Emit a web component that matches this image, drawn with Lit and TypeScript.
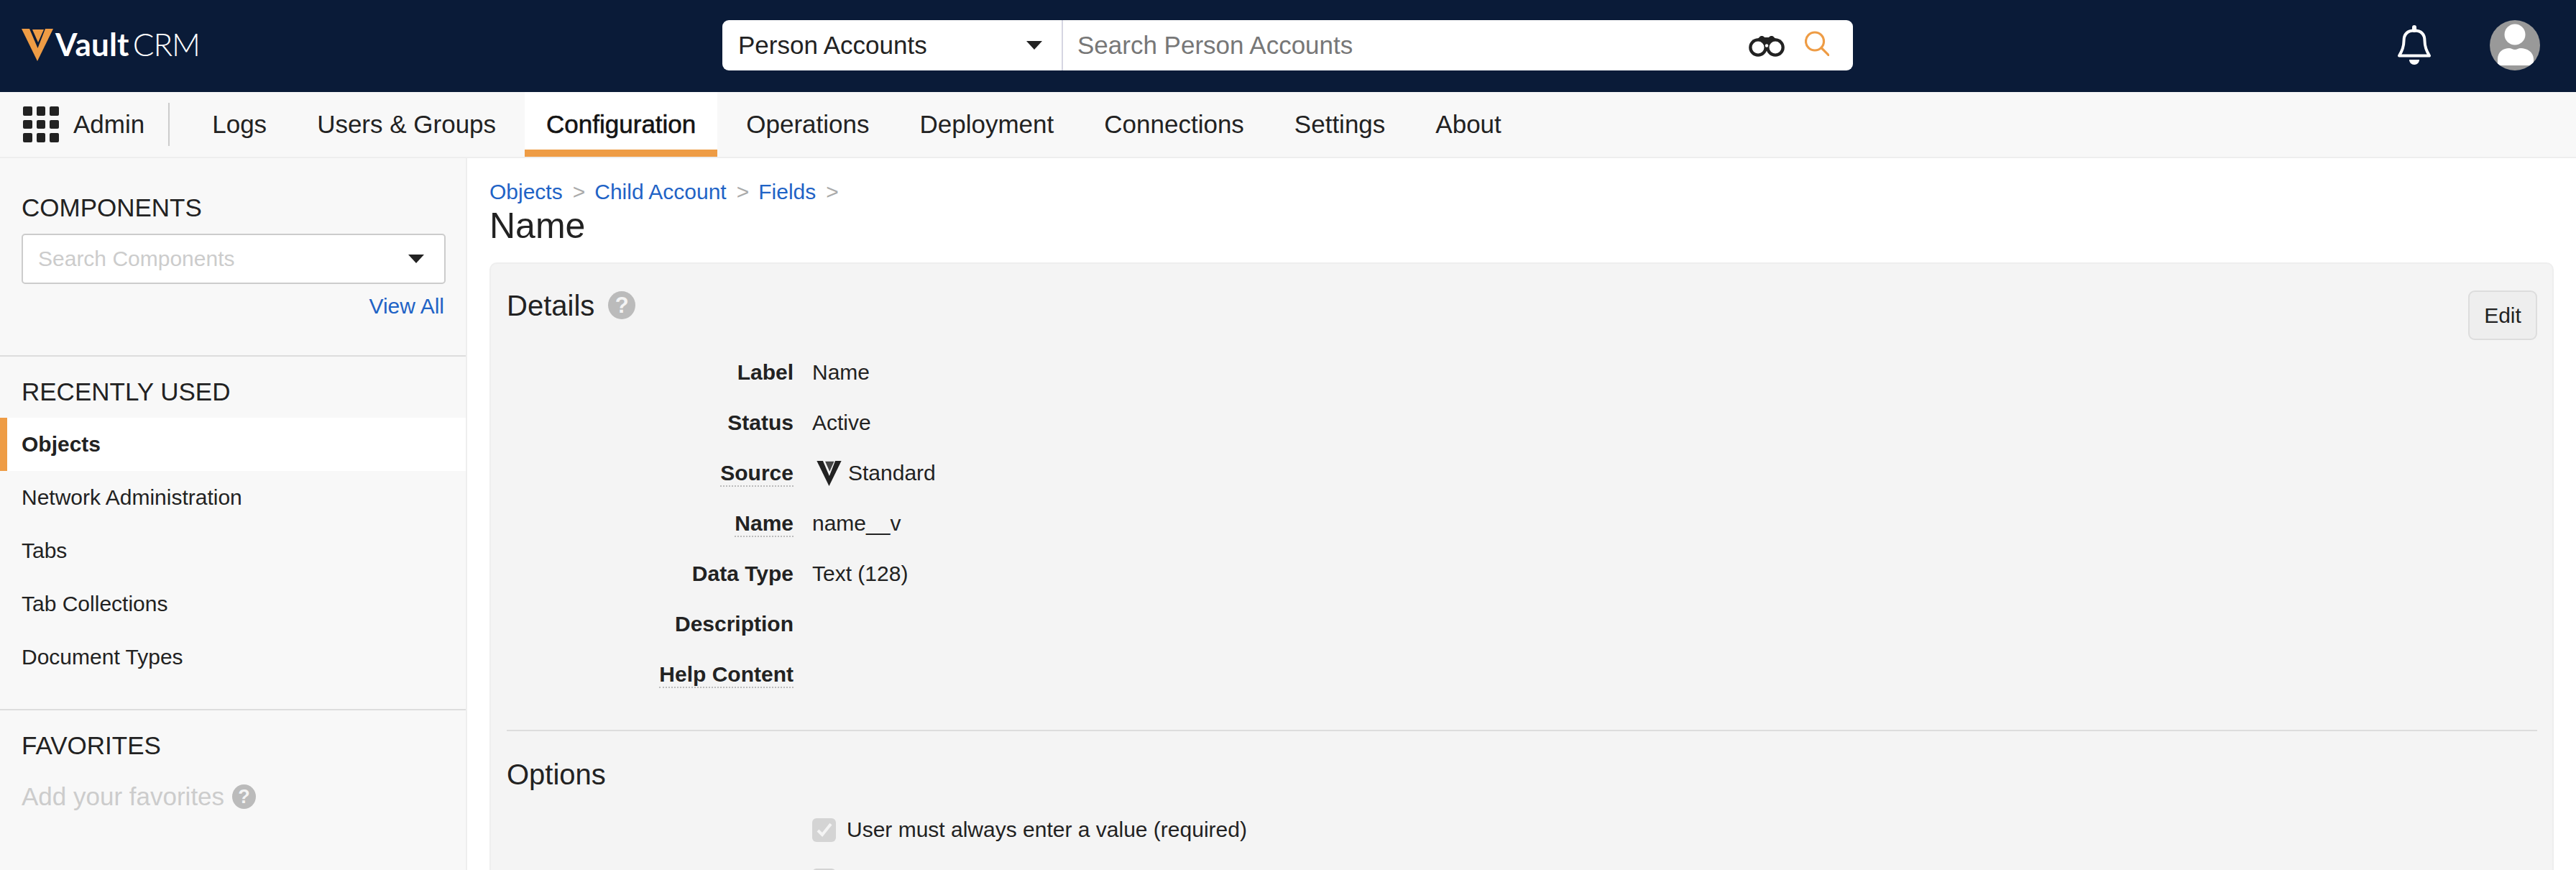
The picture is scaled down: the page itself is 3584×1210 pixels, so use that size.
import { LitElement, html, css } from "lit";
import { customElement } from "lit/decorators.js";

const NAV = ["Logs", "Users & Groups", "Configuration", "Operations", "Deployment", "Connections", "Settings", "About"];
const RECENT = ["Objects", "Network Administration", "Tabs", "Tab Collections", "Document Types"];
const ROWS: { label: string; value?: string; dotted?: boolean; veeva?: boolean }[] = [
  { label: "Label", value: "Name" },
  { label: "Status", value: "Active" },
  { label: "Source", value: "Standard", dotted: true, veeva: true },
  { label: "Name", value: "name__v", dotted: true },
  { label: "Data Type", value: "Text (128)" },
  { label: "Description" },
  { label: "Help Content", dotted: true },
];

@customElement("app-root")
export class AppRoot extends LitElement {
  static styles = css`
    :host {
      display: block;
      width: 100%;
      height: 1210px;
      overflow: hidden;
      background: #fff;
      color: #222;
      font-family: "Liberation Sans", Arial, sans-serif;
      font-size: 30px;
    }
    * { box-sizing: border-box; }
    .top {
      height: 128px;
      background: #0a1b38;
      display: flex;
      align-items: center;
    }
    .brand {
      width: 1005px;
      padding-left: 30px;
      display: flex;
      align-items: center;
      font-family: Lato, sans-serif;
      font-size: 44px;
      line-height: 48px;
      color: #fff;
    }
    .brand svg { display: block; margin-right: 3px; margin-top: -3px; }
    .brand b { font-weight: 700; letter-spacing: 0.2px; margin-right: 5px; margin-top: -6px; }
    .brand span { font-weight: 300; letter-spacing: -1px; margin-top: -6px; }
    .search {
      width: 1573px;
      height: 70px;
      margin-bottom: 2px;
      background: #fff;
      border-radius: 9px;
      display: flex;
      align-items: center;
      font-size: 35px;
    }
    .scope {
      width: 474px;
      height: 70px;
      padding: 0 27px 0 22px;
      border-right: 2px solid #d5d5e2;
      display: flex;
      align-items: center;
      justify-content: space-between;
    }
    .caret {
      width: 0;
      height: 0;
      border-left: 11px solid transparent;
      border-right: 11px solid transparent;
      border-top: 12px solid #222;
    }
    .hint { flex: 1; padding-left: 20px; color: #777; }
    .bino { margin-right: 28px; display: block; margin-top: 3px; }
    .lens { margin-right: 33px; display: block; margin-top: -5px; }
    .bell { margin-left: 757px; display: block; margin-top: -3px; }
    .avatar { margin-left: 81px; display: block; margin-bottom: 2px; }

    .nav {
      height: 92px;
      background: #f8f8f8;
      border-bottom: 2px solid #eee;
      display: flex;
      font-size: 35px;
    }
    .apps {
      display: flex;
      align-items: center;
      padding-left: 32px;
      height: 90px;
    }
    .grid {
      width: 50px;
      height: 50px;
      display: grid;
      grid-template-columns: repeat(3, 1fr);
      gap: 6px;
      margin-right: 20px;
    }
    .grid i { background: #222; border-radius: 2px; display: block; }
    .sep { width: 2px; height: 60px; background: #ccc; margin: 0 29px 0 33px; }
    .tabs { display: flex; gap: 10px; height: 90px; }
    .tab {
      padding: 0 30px;
      line-height: 90px;
      white-space: nowrap;
    }
    .tab.on {
      background: #fff;
      border-bottom: 10px solid #ee9c45;
      -webkit-text-stroke: 0.6px #222;
      color: #111;
    }

    .body { display: flex; height: 990px; }
    .side {
      width: 650px;
      flex: none;
      background: #f8f8f8;
      border-right: 2px solid #eee;
    }
    .block { border-bottom: 2px solid #ddd; }
    .block.comp { padding: 49px 28px 51px 30px; }
    .block.recent { padding: 29px 0 35px; }
    .block.fav { border-bottom: 0; padding: 29px 30px 0; }
    .cap {
      font-size: 35px;
      line-height: 40px;
      font-weight: 400;
      margin: 0;
    }
    .recent .cap { padding-left: 30px; }
    .pick {
      margin-top: 16px;
      height: 70px;
      background: #fff;
      border: 2px solid #ccc;
      border-radius: 5px;
      padding: 0 28px 0 21px;
      display: flex;
      align-items: center;
      justify-content: space-between;
      color: #ccc;
    }
    .viewall {
      margin-top: 14px;
      text-align: right;
      line-height: 34px;
      padding-right: 2px;
      color: #1f63c6;
    }
    .list { margin-top: 16px; }
    .item { height: 74px; line-height: 74px; padding-left: 30px; }
    .item.on {
      background: #fff;
      border-left: 10px solid #ee9c45;
      padding-left: 20px;
      font-weight: 700;
    }
    .addfav {
      margin-top: 31px;
      font-size: 35px;
      line-height: 40px;
      color: #ccc;
      display: flex;
      align-items: center;
      gap: 11px;
    }
    .help {
      border-radius: 50%;
      background: #bbb;
      color: #f4f4f4;
      font-weight: 700;
      display: flex;
      align-items: center;
      justify-content: center;
      flex: none;
    }
    .help.sm { width: 33px; height: 34px; font-size: 27px; }
    .help.lg { width: 38px; height: 39px; font-size: 31px; margin-top: -1px; }

    .main { flex: 1; padding: 30px 31px 0; min-width: 0; }
    .crumbs { display: flex; line-height: 34px; color: #1f63c6; }
    .crumbs i { font-style: normal; color: #aaa; margin: 0 13px 0 14px; }
    .title { margin: 2px 0 23px 0; font-size: 50px; line-height: 56px; font-weight: 400; }
    .panel {
      background: #f4f4f4;
      border: 2px solid #eee;
      border-bottom: 0;
      border-radius: 10px 10px 0 0;
      padding: 36px 21px 0 22px;
      height: 900px;
    }
    .head { display: flex; justify-content: space-between; align-items: flex-start; margin-bottom: 10px; }
    .h2 { margin: 0; font-size: 40px; line-height: 44px; font-weight: 400; }
    .dt { display: flex; align-items: center; gap: 19px; }
    .edit {
      margin-top: 1px;
      width: 96px;
      height: 69px;
      background: #eee;
      border: 2px solid #ddd;
      border-radius: 9px;
      display: flex;
      align-items: center;
      justify-content: center;
      font-size: 30px;
    }
    .row { display: flex; height: 70px; align-items: center; }
    .lab { width: 399px; text-align: right; font-weight: 700; line-height: 34px; flex: none; }
    .lab span { display: inline-block; }
    .lab span.dot { border-bottom: 2px dotted #bbb; margin-bottom: -2px; }
    .val { margin-left: 26px; display: flex; align-items: center; line-height: 34px; }
    .val svg { display: block; margin: 0 9px 0 6px; }
    .rule { height: 2px; background: #ddd; margin: 42px 0 38px; }
    .optrow { display: flex; height: 70px; align-items: center; padding-left: 425px; }
    .box {
      width: 33px;
      height: 33px;
      border-radius: 6px;
      margin-right: 15px;
      flex: none;
      display: flex;
      align-items: center;
      justify-content: center;
    }
    .box.on { background: #d4d4d4; }
    .box.off { background: #f8f8f8; border: 2px solid #d4d4d4; }
    .opts { margin-top: 20px; }
  `;

  private veeva(w: number, h: number, fg: string, gap: string, inner: string) {
    return html`<svg width=${w} height=${h} viewBox="0 0 44 45">
      <polygon points="0,0 44,0 22,45" fill=${fg}></polygon>
      <polygon points="11,0 33,0 22.5,27" fill=${gap}></polygon>
      <polygon points="15,1 31,1 23,19" fill=${inner}></polygon>
    </svg>`;
  }

  render() {
    return html`
      <div class="top">
        <div class="brand">
          ${this.veeva(44, 45, "#ee9c45", "#0a1b38", "#ee9c45")}
          <b>Vault</b><span>CRM</span>
        </div>
        <div class="search">
          <div class="scope"><span>Person Accounts</span><div class="caret"></div></div>
          <div class="hint">Search Person Accounts</div>
          <svg class="bino" width="50" height="29" viewBox="0 0 50 29">
            <path d="M4 12C8 6 13 4 15 1.500C17 -.5 20 -.5 22 2H28C30 -.5 33 -.5 35 1.500C37 4 42 6 46 12V20H4Z" fill="#222"></path>
            <circle cx="13" cy="16" r="12.800" fill="#222"></circle>
            <circle cx="37" cy="16" r="12.800" fill="#222"></circle>
            <circle cx="13" cy="16" r="8.500" fill="#fff"></circle>
            <circle cx="37" cy="16" r="8.500" fill="#fff"></circle>
            <circle cx="25" cy="13.500" r="2.200" fill="#fff"></circle>
          </svg>
          <svg class="lens" width="34" height="35" viewBox="0 0 34 35" fill="none" stroke="#ee9c45" stroke-width="3.200">
            <circle cx="14" cy="14.500" r="12.500"></circle>
            <path d="M23.500 24L33 33.500" stroke-linecap="round"></path>
          </svg>
        </div>
        <svg class="bell" width="48" height="55" viewBox="0 0 48 55">
          <rect x="21" y="0" width="6" height="10" rx="3" fill="#fff"></rect>
          <path d="M3 42.500C7 36 9.500 30 9.500 22C9.500 12 15 7.500 24 7.500C33 7.500 38.500 12 38.500 22C38.500 30 41 36 45 42.500Z" fill="none" stroke="#fff" stroke-width="4" stroke-linejoin="round"></path>
          <path d="M17 48H31C31 52 28 55 24 55C20 55 17 52 17 48Z" fill="#fff"></path>
        </svg>
        <svg class="avatar" width="70" height="70" viewBox="0 0 70 70">
          <defs><clipPath id="ac"><circle cx="35" cy="35" r="35"></circle></clipPath></defs>
          <circle cx="35" cy="35" r="35" fill="#999"></circle>
          <circle cx="35" cy="20" r="14.500" fill="#fff"></circle>
          <path d="M11 63V54C11 44 19 39 27 39C30 39 32 41 35 41C38 41 40 39 43 39C51 39 61 44 61 54V63Z" fill="#fff" clip-path="url(#ac)"></path>
        </svg>
      </div>

      <div class="nav">
        <div class="apps">
          <div class="grid">${Array.from({ length: 9 }, () => html`<i></i>`)}</div>
          <span>Admin</span>
          <div class="sep"></div>
        </div>
        <div class="tabs">
          ${NAV.map((n) => html`<div class="tab ${n === "Configuration" ? "on" : ""}">${n}</div>`)}
        </div>
      </div>

      <div class="body">
        <aside class="side">
          <section class="block comp">
            <h3 class="cap">COMPONENTS</h3>
            <div class="pick"><span>Search Components</span><div class="caret"></div></div>
            <div class="viewall">View All</div>
          </section>
          <section class="block recent">
            <h3 class="cap">RECENTLY USED</h3>
            <div class="list">
              ${RECENT.map((r, i) => html`<div class="item ${i === 0 ? "on" : ""}">${r}</div>`)}
            </div>
          </section>
          <section class="block fav">
            <h3 class="cap">FAVORITES</h3>
            <div class="addfav"><span>Add your favorites</span><div class="help sm">?</div></div>
          </section>
        </aside>

        <main class="main">
          <div class="crumbs">
            <span>Objects</span><i>&gt;</i><span>Child Account</span><i>&gt;</i><span>Fields</span><i>&gt;</i>
          </div>
          <h1 class="title">Name</h1>
          <div class="panel">
            <div class="head">
              <div class="dt"><h2 class="h2">Details</h2><div class="help lg">?</div></div>
              <div class="edit">Edit</div>
            </div>
            ${ROWS.map(
              (r) => html`<div class="row">
                <div class="lab"><span class=${r.dotted ? "dot" : ""}>${r.label}</span></div>
                <div class="val">
                  ${r.veeva ? this.veeva(35, 35, "#222", "#f4f4f4", "#444") : ""}
                  ${r.value ?? ""}
                </div>
              </div>`
            )}
            <div class="rule"></div>
            <h2 class="h2">Options</h2>
            <div class="opts">
              <div class="optrow">
                <div class="box on">
                  <svg width="22" height="20" viewBox="0 0 22 20" fill="none" stroke="#f4f4f4" stroke-width="4"><path d="M2 11L8 17L20 2"></path></svg>
                </div>
                <span>User must always enter a value (required)</span>
              </div>
              <div class="optrow"><div class="box off"></div></div>
            </div>
          </div>
        </main>
      </div>
    `;
  }
}
